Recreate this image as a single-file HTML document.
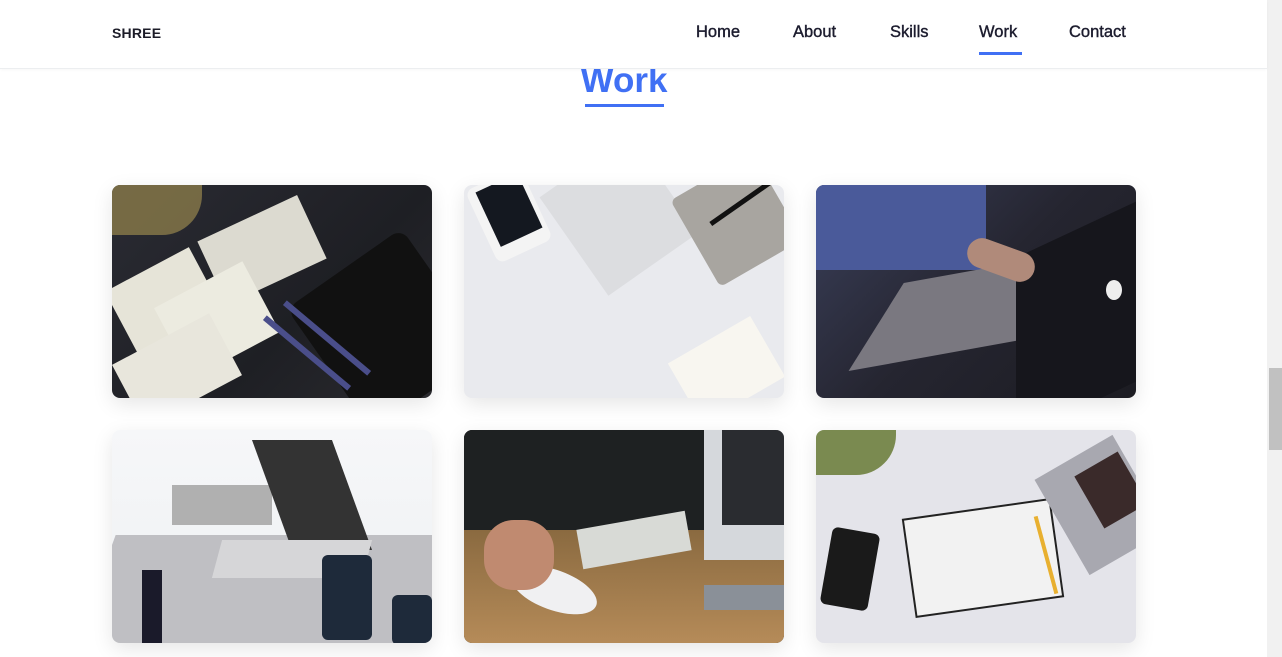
<!DOCTYPE html>
<html><head><meta charset="utf-8"><style>
*{margin:0;padding:0;box-sizing:border-box}
html,body{width:1282px;height:657px;overflow:hidden;background:#fff;font-family:"Liberation Sans",sans-serif}
.hdr{position:absolute;left:0;top:0;width:1267px;height:69px;background:#fff;border-bottom:1px solid #eceef0;z-index:5;box-shadow:0 1px 3px rgba(0,0,0,.03)}
.logo{position:absolute;left:112px;top:25px;font-size:14px;font-weight:bold;color:#1c1c28;letter-spacing:.2px}
.nav a{position:absolute;top:23px;font-size:16.5px;color:#1c1c2e;text-decoration:none;font-weight:normal;-webkit-text-stroke:.4px #1c1c2e}
.ul{position:absolute;left:979px;top:52px;width:43px;height:3px;background:#4070f4}
.title{position:absolute;left:0;width:1248px;text-align:center;top:61px;font-size:35px;font-weight:bold;color:#4070f4}
.tul{position:absolute;left:585px;top:104px;width:79px;height:3px;background:#4070f4}
.card{position:absolute;width:320px;height:213px;border-radius:8px;overflow:hidden;box-shadow:0 6px 20px rgba(0,0,0,.10)}
.card div{position:absolute}
.sb{position:absolute;left:1267px;top:0;width:15px;height:657px;background:#f1f1f1}
.th{position:absolute;left:1269px;top:368px;width:13px;height:82px;background:#c1c1c1}
</style></head><body>
<div class="hdr">
<div class="logo">SHREE</div>
<div class="nav"><a style="left:696px">Home</a><a style="left:793px">About</a><a style="left:890px">Skills</a><a style="left:979px">Work</a><a style="left:1069px">Contact</a></div>
<div class="ul"></div>
</div>
<div class="title">Work</div>
<div class="tul"></div>

<div class="card" style="left:112px;top:185px;background:linear-gradient(135deg,#2a2b33,#1e1f24 60%,#2a2a2e)">
<div style="left:0;top:0;width:90px;height:50px;background:#8a7a4a;border-radius:0 0 40px 0;opacity:.8"></div>
<div style="width:110px;height:70px;background:#dcdad0;transform:rotate(-25deg);left:95px;top:30px"></div>
<div style="left:5px;top:80px;width:95px;height:75px;background:#e6e4d8;transform:rotate(-28deg)"></div>
<div style="left:55px;top:95px;width:100px;height:80px;background:#ecebe0;transform:rotate(-28deg)"></div>
<div style="left:10px;top:150px;width:110px;height:70px;background:#e8e6dc;transform:rotate(-28deg)"></div>
<div style="top:70px;width:140px;height:150px;background:#111;border-radius:12px;transform:rotate(-35deg);left:205px"></div>
<div style="left:160px;top:150px;width:110px;height:6px;background:#4a4e8a;transform:rotate(40deg)"></div>
<div style="left:140px;top:165px;width:110px;height:6px;background:#4a4e8a;transform:rotate(40deg)"></div>
</div>

<div class="card" style="left:464px;top:185px;background:#e9eaee">
<div style="left:15px;top:-10px;width:60px;height:80px;background:#f4f4f4;border-radius:8px;transform:rotate(-25deg)"></div>
<div style="left:22px;top:-5px;width:46px;height:60px;background:#141820;transform:rotate(-25deg)"></div>
<div style="left:100px;top:-30px;width:110px;height:120px;background:#dcdde0;transform:rotate(-35deg)"></div>
<div style="left:225px;top:-15px;width:95px;height:100px;background:#a8a5a0;border-radius:6px;transform:rotate(-30deg)"></div>
<div style="left:240px;top:15px;width:75px;height:5px;background:#111;transform:rotate(-35deg)"></div>
<div style="left:215px;top:150px;width:95px;height:70px;background:#f8f6f0;transform:rotate(-30deg)"></div>
</div>

<div class="card" style="left:816px;top:185px;background:linear-gradient(135deg,#3a3f5a,#252530 50%,#1c1c22)">
<div style="left:0;top:0;width:170px;height:85px;background:#4a5a9a"></div>
<div style="left:80px;top:70px;width:260px;height:90px;background:#7a7880;transform:skewX(-40deg) rotate(-12deg)"></div>
<div style="left:200px;top:40px;width:140px;height:180px;background:#16161c;transform:skewY(-25deg)"></div>
<div style="left:150px;top:60px;width:70px;height:30px;background:#b08a7a;border-radius:20px;transform:rotate(20deg)"></div>
<div style="left:290px;top:95px;width:16px;height:20px;background:#eee;border-radius:50%"></div>
</div>

<div class="card" style="left:112px;top:430px;background:linear-gradient(#f6f7f9,#eef0f2)">
<div style="left:-20px;top:105px;width:370px;height:130px;background:#bfbfc3;transform:skewX(-20deg)"></div>
<div style="left:60px;top:55px;width:100px;height:40px;background:#b0b0b0"></div>
<div style="left:160px;top:10px;width:80px;height:110px;background:#333;transform:skewX(20deg)"></div>
<div style="left:105px;top:110px;width:150px;height:38px;background:#d6d6d8;transform:skewX(-15deg)"></div>
<div style="left:210px;top:125px;width:50px;height:85px;background:#1e2a3a;border-radius:6px"></div>
<div style="left:280px;top:165px;width:40px;height:50px;background:#1e2a3a;border-radius:6px"></div>
<div style="left:30px;top:140px;width:20px;height:80px;background:#1a1a2a"></div>
</div>

<div class="card" style="left:464px;top:430px;background:#222">
<div style="left:0;top:0;width:320px;height:120px;background:#1e2122"></div>
<div style="left:0;top:100px;width:320px;height:120px;background:linear-gradient(#8a6a40,#b88d5a)"></div>
<div style="left:240px;top:0;width:80px;height:130px;background:#d5d8dc"></div>
<div style="left:258px;top:0;width:62px;height:95px;background:#2a2c30"></div>
<div style="left:240px;top:155px;width:80px;height:25px;background:#8a9098"></div>
<div style="left:115px;top:90px;width:110px;height:40px;background:#d8dad6;transform:rotate(-10deg)"></div>
<div style="left:45px;top:140px;width:90px;height:40px;background:#f0f0f2;border-radius:50%;transform:rotate(20deg)"></div>
<div style="left:20px;top:90px;width:70px;height:70px;background:#c08a70;border-radius:30px"></div>
</div>

<div class="card" style="left:816px;top:430px;background:#e4e4ea">
<div style="left:0;top:0;width:80px;height:45px;background:#7a8a50;border-radius:0 0 40px 0"></div>
<div style="left:10px;top:100px;width:48px;height:78px;background:#1a1a1a;border-radius:6px;transform:rotate(10deg)"></div>
<div style="left:92px;top:78px;width:150px;height:100px;background:#f2f2f2;border:2px solid #222;transform:rotate(-8deg)"></div>
<div style="left:240px;top:20px;width:90px;height:110px;background:#a8a8b0;transform:rotate(-30deg)"></div>
<div style="left:270px;top:30px;width:50px;height:60px;background:#3a2a2a;transform:rotate(-30deg)"></div>
<div style="left:228px;top:85px;width:4px;height:80px;background:#e8b030;transform:rotate(-15deg)"></div>
</div>

<div class="sb"></div><div class="th"></div>
</body></html>
